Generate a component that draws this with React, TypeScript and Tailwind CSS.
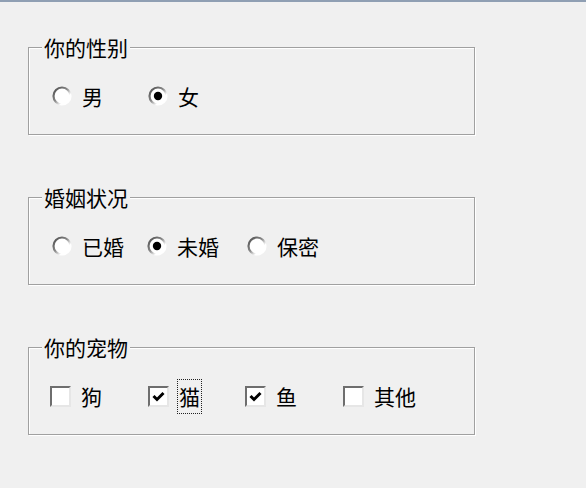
import type { ReactNode } from 'react'

const FONT = { fontFamily: '"Microsoft YaHei", "Noto Sans CJK SC", "Noto Sans", sans-serif' }

function Radio({ checked }: { checked?: boolean }) {
  return (
    <svg width="20" height="20" viewBox="0 0 20 20" className="shrink-0">
      <defs>
        <linearGradient id="ring" x1="0" y1="0" x2="1" y2="1">
          <stop offset="0" stopColor="#4a4a4a" />
          <stop offset="0.45" stopColor="#8a8a8a" />
          <stop offset="0.7" stopColor="#ffffff" />
        </linearGradient>
      </defs>
      <circle cx="10" cy="10" r="8.5" fill="#ffffff" stroke="url(#ring)" strokeWidth="2.2" />
      {checked && <circle cx="10" cy="10" r="4.2" fill="#000000" />}
    </svg>
  )
}

function Checkbox({ checked }: { checked?: boolean }) {
  return (
    <div className="flex h-[21px] w-[21px] shrink-0 items-center justify-center border-2 border-t-[#6e6e6e] border-l-[#6e6e6e] border-b-[#e6e6e6] border-r-[#e6e6e6] bg-white">
      {checked && (
        <svg width="13" height="13" viewBox="0 0 13 13">
          <path d="M1.5 6 L5 9.5 L11.5 3" fill="none" stroke="#000" strokeWidth="3" />
        </svg>
      )}
    </div>
  )
}

function Group({ title, children }: { title: string; children: ReactNode }) {
  return (
    <div className="relative ml-[28px] h-[88px] w-[447px] border border-[#a0a0a0] shadow-[1px_1px_0_#ffffff,inset_1px_1px_0_#ffffff]">
      <span className="absolute -top-[11px] left-[13px] bg-[#f0f0f0] px-[2px] text-[21px] leading-[21px] text-black">
        {title}
      </span>
      <div className="mt-[37px] flex h-[22px] items-center">{children}</div>
    </div>
  )
}

function Item({ w, control, label, focus }: { w: string; control: ReactNode; label: string; focus?: boolean }) {
  return (
    <div className={`flex items-center ${w}`}>
      {control}
      {focus ? (
        <span className="ml-[8px] flex h-[35px] items-center border border-dotted border-[#222] px-[1px] text-[21px] leading-[22px]">
          {label}
        </span>
      ) : (
        <span className="ml-[10px] text-[21px] leading-[22px]">{label}</span>
      )}
    </div>
  )
}

export default function App() {
  return (
    <div className="h-[488px] w-full overflow-hidden bg-[#f0f0f0] text-black" style={FONT}>
      <div className="h-[2px] bg-[#8f9fb3]" />
      <div className="flex flex-col gap-[62px] pt-[45px]">
        <Group title="你的性别">
          <div className="flex pl-[23px]">
            <Item w="w-[96px]" control={<Radio />} label="男" />
            <Item w="w-[96px]" control={<Radio checked />} label="女" />
          </div>
        </Group>
        <Group title="婚姻状况">
          <div className="flex pl-[23px]">
            <Item w="w-[95px]" control={<Radio />} label="已婚" />
            <Item w="w-[100px]" control={<Radio checked />} label="未婚" />
            <Item w="w-[100px]" control={<Radio />} label="保密" />
          </div>
        </Group>
        <Group title="你的宠物">
          <div className="flex pl-[21px]">
            <Item w="w-[98px]" control={<Checkbox />} label="狗" />
            <Item w="w-[97px]" control={<Checkbox checked />} label="猫" focus />
            <Item w="w-[98px]" control={<Checkbox checked />} label="鱼" />
            <Item w="w-[98px]" control={<Checkbox />} label="其他" />
          </div>
        </Group>
      </div>
    </div>
  )
}
